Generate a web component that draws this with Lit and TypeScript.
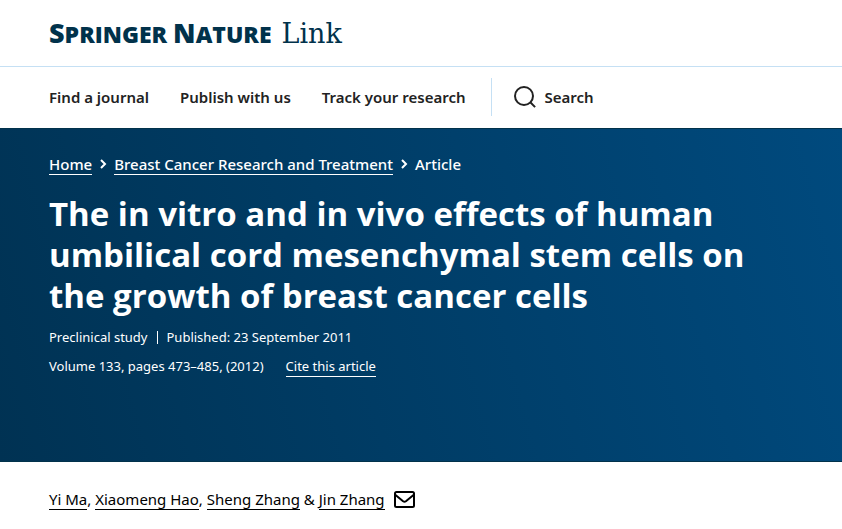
import { LitElement, html, css } from "lit";
import { customElement } from "lit/decorators.js";

@customElement("app-root")
export class AppRoot extends LitElement {
  static styles = css`
    :host {
      display: block;
      font-family: "Noto Sans", "Open Sans", sans-serif;
      font-size: 15px;
      line-height: 24px;
      color: #222;
      background: #fff;
    }
    * {
      box-sizing: border-box;
    }
    a {
      color: inherit;
      text-decoration: none;
    }
    header,
    .hero,
    .authors {
      padding-left: 49px;
      padding-right: 49px;
    }
    header {
      display: flex;
      align-items: center;
      min-height: 67px;
      border-bottom: 1px solid #c5e0f4;
    }
    .logo {
      display: flex;
      align-items: baseline;
      gap: 10px;
      color: #01324b;
      line-height: 32px;
      white-space: nowrap;
    }
    .brand {
      display: flex;
      align-items: baseline;
      gap: 6px;
      font-family: "Open Sans", sans-serif;
      font-weight: 800;
      font-size: 23px;
    }
    .initial {
      font-size: 27px;
    }
    .product {
      font-family: "DejaVu Serif", serif;
      font-size: 27px;
    }
    nav.main {
      display: flex;
      align-items: center;
      padding: 11px 49px 12px;
      font-weight: 600;
    }
    .links {
      display: flex;
      gap: 31px;
      padding-right: 25px;
    }
    .search {
      display: flex;
      align-items: center;
      gap: 9px;
      min-height: 38px;
      padding-left: 22px;
      border-left: 1px solid #c5e0f4;
    }
    svg {
      display: block;
      fill: none;
      stroke: currentColor;
    }
    .hero {
      min-height: 334px;
      padding-top: 23px;
      color: #fff;
      border-top: 1px solid #01324b;
      border-bottom: 1px solid #01324b;
      background: linear-gradient(75deg, #003253, #004a7e);
    }
    ol {
      display: flex;
      flex-wrap: wrap;
      align-items: center;
      margin: 0;
      padding: 0;
      list-style: none;
      font-weight: 500;
    }
    li {
      display: flex;
      align-items: center;
    }
    .crumbs svg {
      margin: 0 6px;
    }
    .underlined {
      display: inline-block;
      line-height: 20px;
      border-bottom: 1px solid currentColor;
    }
    h1 {
      margin: 17px 0 9px;
      font-family: "Open Sans", sans-serif;
      font-size: 33px;
      font-weight: 700;
      line-height: 41px;
    }
    .meta {
      display: flex;
      align-items: baseline;
      flex-wrap: wrap;
      min-height: 29px;
      font-size: 13px;
    }
    .kind {
      padding-right: 9px;
      border-right: 1px solid #fff;
      margin-right: 9px;
      line-height: 13px;
    }
    .volume {
      margin-right: 22px;
    }
    .authors {
      display: flex;
      align-items: center;
      padding-top: 25px;
      padding-bottom: 16px;
      color: #000;
    }
    .authors svg {
      margin-left: 9px;
    }
  `;

  render() {
    return html`
      <header>
        <a class="logo" href="#" aria-label="Springer Nature Link">
          <span class="brand">
            <span><span class="initial">S</span>PRINGER</span>
            <span><span class="initial">N</span>ATURE</span>
          </span>
          <span class="product">Link</span>
        </a>
      </header>
      <nav class="main" aria-label="Main">
        <div class="links">
          <a href="#">Find a journal</a>
          <a href="#">Publish with us</a>
          <a href="#">Track your research</a>
        </div>
        <a class="search" href="#">
          <svg width="22" height="22" viewBox="0 0 22 22" stroke-width="2" aria-hidden="true">
            <circle cx="10" cy="10" r="9" />
            <path d="M16.3 16.3l4.8 4.8" />
          </svg>
          Search
        </a>
      </nav>
      <section class="hero">
        <nav class="crumbs" aria-label="Breadcrumbs">
          <ol>
            <li><a class="underlined" href="#">Home</a>${this.chevron()}</li>
            <li>
              <a class="underlined" href="#">Breast Cancer Research and Treatment</a>${this.chevron()}
            </li>
            <li>Article</li>
          </ol>
        </nav>
        <h1>The in vitro and in vivo effects of human umbilical cord mesenchymal stem cells on the growth of breast cancer cells</h1>
        <div class="meta">
          <span class="kind">Preclinical study</span>
          <span>Published: <time datetime="2011-09-23">23 September 2011</time></span>
        </div>
        <div class="meta">
          <span class="volume">Volume 133, pages 473–485, (2012)</span>
          <a class="underlined" href="#">Cite this article</a>
        </div>
      </section>
      <div class="authors">
        <span>
          <a class="underlined" href="#">Yi Ma</a>,
          <a class="underlined" href="#">Xiaomeng Hao</a>,
          <a class="underlined" href="#">Sheng Zhang</a> &amp;
          <a class="underlined" href="#">Jin Zhang</a>
        </span>
        <svg width="21" height="17" viewBox="0 0 21 17" stroke-width="2" stroke-linejoin="round" stroke-linecap="round" aria-hidden="true">
          <rect x="1" y="1" width="19" height="15" rx="1.5" />
          <path d="M1.5 4l7.6 6.3q1.4 1 2.8 0L19.5 4" />
        </svg>
      </div>
    `;
  }

  private chevron() {
    return html`<svg width="10" height="10" viewBox="0 0 10 10" stroke-width="2" aria-hidden="true">
      <path d="M3 1l4 4-4 4" />
    </svg>`;
  }
}
